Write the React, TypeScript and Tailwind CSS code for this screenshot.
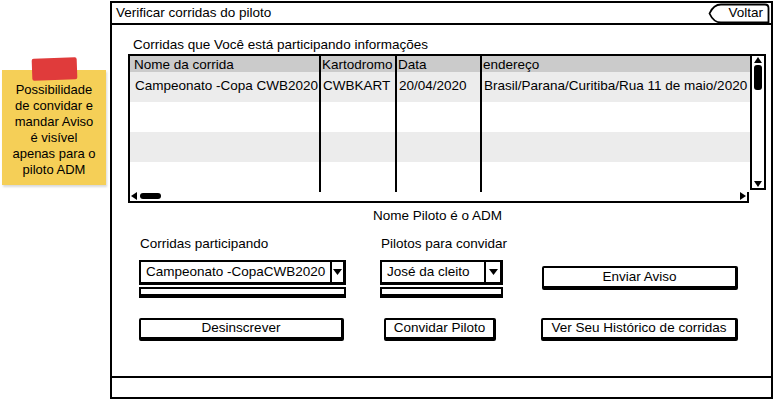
const rows = [
  { nome: "Campeonato -Copa CWB2020", kart: "CWBKART", data: "20/04/2020", end: "Brasil/Parana/Curitiba/Rua 11 de maio/2020" },
  { nome: "", kart: "", data: "", end: "" },
  { nome: "", kart: "", data: "", end: "" },
  { nome: "", kart: "", data: "", end: "" },
];

function SketchButton({ label, className }: { label: string; className: string }) {
  return (
    <div
      className={`flex items-center justify-center whitespace-nowrap rounded-[2px] border-t-2 border-l-2 border-r-[3px] border-b-[4px] border-black bg-white text-[13.5px] ${className}`}
    >
      {label}
    </div>
  );
}

function Combo({ value, className }: { value: string; className: string }) {
  return (
    <div className={className}>
      <div className="flex h-[25px] border-2 border-r-[3px] border-b-[3px] border-black bg-white">
        <div className="flex flex-1 items-center px-[5px] text-[13.5px] whitespace-nowrap">{value}</div>
        <div className="flex w-[16px] items-center justify-center border-l-2 border-black">
          <svg width="9" height="6" viewBox="0 0 9 6">
            <path d="M0 0 H9 L4.5 6 Z" fill="black" />
          </svg>
        </div>
      </div>
      <div className="mt-[2px] h-[11px] border-2 border-b-[4px] border-black bg-white" />
    </div>
  );
}

export default function App() {
  return (
    <div className="flex h-[401px] w-[775px] overflow-hidden bg-white font-['Liberation_Sans',sans-serif] text-black">
      {/* sticky note */}
      <div className="w-[110px] shrink-0 pl-[2px] pt-[58px]">
        <div className="relative w-[104px]">
          <div className="ml-[30px] h-[22px] w-[45px] -rotate-2 rounded-[2px] bg-[#e03b3b]" />
          <div className="-mt-[10px] flex h-[115px] w-[104px] flex-col items-center justify-center bg-[#f5cf57] pt-[4px] text-center text-[13px] leading-[16px] shadow-[1px_2px_2px_rgba(0,0,0,0.15)]">
            <span>Possibilidade</span>
            <span>de convidar e</span>
            <span>mandar Aviso</span>
            <span>é visível</span>
            <span>apenas para o</span>
            <span>piloto ADM</span>
          </div>
        </div>
      </div>

      {/* window */}
      <div className="mt-[1px] flex h-[398px] w-[663px] flex-col border-2 border-black">
        <div className="flex h-[22px] shrink-0 items-center justify-between border-b-2 border-black pl-[4px] pr-[1px]">
          <span className="text-[13.5px]">Verificar corridas do piloto</span>
          <div className="relative flex h-[21px] w-[62px] items-center justify-end pr-[7px] text-[13.5px]">
            <svg className="absolute inset-0" width="62" height="21" viewBox="0 0 62 21">
              <path
                d="M1.5 10.5 C4 5 7 1.5 13 1.5 H57 Q60.5 1.5 60.5 5 V19.5 H13 C7 19.5 4 16 1.5 10.5 Z"
                fill="white"
                stroke="black"
                strokeWidth="1.8"
              />
            </svg>
            <span className="relative">Voltar</span>
          </div>
        </div>

        <div className="flex-1 pl-[16px]">
          <div className="mt-[12px] pl-[5px] text-[13.5px] leading-[15px]">
            Corridas que Você está participando informações
          </div>

          {/* table */}
          <div className="mt-[2px] w-[638px]">
            <div className="flex h-[136px] border-2 border-black">
              <div className="flex flex-1 text-[13.5px]">
                <table className="w-full border-collapse">
                  <thead>
                    <tr className="h-[16px] bg-[#cbcbcb] text-left">
                      <th className="w-[190px] border-r-2 border-black pl-[4px] font-normal leading-[15px]">Nome da corrida</th>
                      <th className="w-[76px] border-r-2 border-black pl-[1px] font-normal leading-[15px]">Kartodromo</th>
                      <th className="w-[85px] border-r-2 border-black pl-[1px] font-normal leading-[15px]">Data</th>
                      <th className="pl-[1px] font-normal leading-[15px]">endereço</th>
                    </tr>
                  </thead>
                  <tbody>
                    {rows.map((r, i) => (
                      <tr key={i} className={`h-[30px] ${i % 2 === 0 ? "bg-[#ececec]" : "bg-white"}`}>
                        <td className="border-r-2 border-black pl-[5px] pb-[2px] whitespace-nowrap">{r.nome}</td>
                        <td className="border-r-2 border-black pl-[2px] pb-[2px] whitespace-nowrap">{r.kart}</td>
                        <td className="border-r-2 border-black pl-[2px] pb-[2px] whitespace-nowrap">{r.data}</td>
                        <td className="pl-[2px] pb-[2px] whitespace-nowrap">{r.end}</td>
                      </tr>
                    ))}
                  </tbody>
                </table>
              </div>
              {/* vertical scrollbar */}
              <div className="flex w-[14px] flex-col items-center border-l-2 border-black py-[1px]">
                <svg width="8" height="6" viewBox="0 0 8 6">
                  <path d="M4 0 L8 6 H0 Z" fill="black" />
                </svg>
                <div className="mt-[2px] h-[25px] w-[8px] rounded-[3px] bg-black" />
                <div className="flex-1" />
                <svg width="8" height="6" viewBox="0 0 8 6">
                  <path d="M0 0 H8 L4 6 Z" fill="black" />
                </svg>
              </div>
            </div>
            {/* horizontal scrollbar */}
            <div className="-mt-[2px] flex h-[15px] w-[621px] items-center border-2 border-black px-[1px]">
              <svg width="6" height="8" viewBox="0 0 6 8">
                <path d="M0 4 L6 0 V8 Z" fill="black" />
              </svg>
              <div className="ml-[3px] h-[6px] w-[21px] rounded-[3px] bg-black" />
              <div className="flex-1" />
              <svg width="6" height="8" viewBox="0 0 6 8">
                <path d="M6 4 L0 0 V8 Z" fill="black" />
              </svg>
            </div>
          </div>

          <div className="mt-[5px] pr-[24px] text-center text-[13.5px] leading-[15px]">Nome Piloto é o ADM</div>

          {/* form */}
          <div className="ml-[11px] mt-[13px] flex">
            <div className="flex w-[207px] flex-col">
              <div className="whitespace-nowrap pl-[1px] text-[13.5px] leading-[15px]">Corridas participando</div>
              <Combo value="Campeonato -CopaCWB2020" className="mt-[9px] w-[207px]" />
              <SketchButton label="Desinscrever" className="mt-[20px] h-[23px] w-[205px]" />
            </div>
            <div className="ml-[34px] flex w-[123px] flex-col">
              <div className="whitespace-nowrap pl-[1px] text-[13.5px] leading-[15px]">Pilotos para convidar</div>
              <Combo value="José da cleito" className="mt-[9px] w-[123px]" />
              <SketchButton label="Convidar Piloto" className="ml-[4px] mt-[20px] h-[23px] w-[112px]" />
            </div>
            <div className="ml-[38px] flex w-[197px] flex-col">
              <SketchButton label="Enviar Aviso" className="ml-[1px] mt-[30px] h-[24px] w-[196px]" />
              <SketchButton label="Ver Seu Histórico de corridas" className="mt-[28px] h-[23px] w-[197px]" />
            </div>
          </div>
        </div>

        <div className="h-[21px] shrink-0 border-t-2 border-black" />
      </div>
    </div>
  );
}
